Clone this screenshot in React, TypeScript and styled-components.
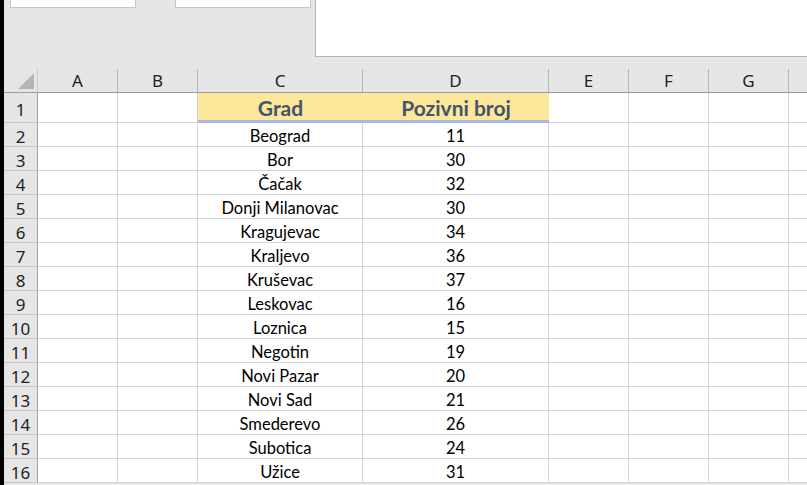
import React from "react";
import styled, { createGlobalStyle } from "styled-components";

const Global = createGlobalStyle`
  html, body { margin: 0; padding: 0; background: #e6e6e6; overflow: hidden; }
  #root { width: 807px; height: 485px; }
`;

const Frame = styled.div`
  width: 807px;
  height: 485px;
  display: flex;
  overflow: hidden;
  background: #e6e6e6;
`;

const Edge = styled.div`
  width: 4px;
  flex: none;
  background: #000;
`;

const Main = styled.div`
  flex: 1;
  display: flex;
  flex-direction: column;
  min-width: 0;
`;

const Top = styled.div`
  height: 69px;
  flex: none;
  display: flex;
  align-items: flex-start;
`;

const Field = styled.div<{ $w: number; $ml: number }>`
  width: ${(p) => p.$w}px;
  margin-left: ${(p) => p.$ml}px;
  height: 8px;
  box-sizing: border-box;
  background: #fff;
  border: 1px solid #c6c6c6;
  border-top: none;
`;

const Panel = styled.div`
  margin-left: 4px;
  flex: 1;
  height: 57px;
  box-sizing: border-box;
  background: #fff;
  border-left: 1px solid #b4b4b4;
  border-bottom: 1px solid #b4b4b4;
`;

const Grid = styled.div`
  display: grid;
  grid-template-columns: 34px 80px 80px 165px 186px 80px 80px 80px 40px;
  grid-auto-rows: 24px;
  grid-template-rows: 24px 30px;
  background: #fff;
`;

const Corner = styled.div`
  background: #e6e6e6;
  border-bottom: 1px solid #9b9b9b;
  border-right: 1px solid #c8c8c8;
  box-sizing: border-box;
  position: relative;
`;

const Tri = styled.div`
  position: absolute;
  right: 3px;
  bottom: 3px;
  width: 0;
  height: 0;
  border-left: 16px solid transparent;
  border-bottom: 16px solid #b5b5b5;
`;

const ColHead = styled.div`
  background: #e6e6e6;
  border-bottom: 1px solid #9b9b9b;
  border-right: 1px solid #b4b4b4;
  box-sizing: border-box;
  display: flex;
  align-items: flex-end;
  justify-content: center;
  font-family: "Noto Sans", "Open Sans", sans-serif;
  font-size: 17px;
  color: #222;
  line-height: 22px;
`;

const RowHead = styled.div`
  background: #e6e6e6;
  border-bottom: 1px solid #c8c8c8;
  border-right: 1px solid #a0a0a0;
  box-sizing: border-box;
  display: flex;
  align-items: center;
  justify-content: center;
  font-family: "Noto Sans", "Open Sans", sans-serif;
  font-size: 17px;
  color: #222;
  padding-top: 3px;
`;

const Cell = styled.div`
  box-sizing: border-box;
  border-right: 1px solid #d4d4d4;
  border-bottom: 1px solid #d4d4d4;
  display: flex;
  align-items: center;
  justify-content: center;
  font-family: "Lato", "Liberation Sans", sans-serif;
  font-size: 16.5px;
  color: #000;
  padding-top: 3px;
`;

const HeadCell = styled.div`
  box-sizing: border-box;
  background: #fce79a;
  border-bottom: 3px solid #a7b8e2;
  display: flex;
  align-items: center;
  justify-content: center;
  font-family: "Lato", "Liberation Sans", sans-serif;
  font-weight: 700;
  font-size: 21px;
  color: #44546a;
  padding-top: 1px;
`;

const cols = ["A", "B", "C", "D", "E", "F", "G", ""];

const data: [string, string][] = [
  ["Beograd", "11"],
  ["Bor", "30"],
  ["Čačak", "32"],
  ["Donji Milanovac", "30"],
  ["Kragujevac", "34"],
  ["Kraljevo", "36"],
  ["Kruševac", "37"],
  ["Leskovac", "16"],
  ["Loznica", "15"],
  ["Negotin", "19"],
  ["Novi Pazar", "20"],
  ["Novi Sad", "21"],
  ["Smederevo", "26"],
  ["Subotica", "24"],
  ["Užice", "31"],
];

export default function App() {
  return (
    <>
      <Global />
      <Frame>
        <Edge />
        <Main>
          <Top>
            <Field $w={126} $ml={6} />
            <Field $w={136} $ml={39} />
            <Panel />
          </Top>
          <Grid>
            <Corner>
              <Tri />
            </Corner>
            {cols.map((c, i) => (
              <ColHead key={i}>{c}</ColHead>
            ))}
            <RowHead>1</RowHead>
            <Cell />
            <Cell />
            <HeadCell>Grad</HeadCell>
            <HeadCell>Pozivni broj</HeadCell>
            <Cell />
            <Cell />
            <Cell />
            <Cell />
            {data.map(([city, code], i) => (
              <React.Fragment key={city}>
                <RowHead>{i + 2}</RowHead>
                <Cell />
                <Cell />
                <Cell>{city}</Cell>
                <Cell>{code}</Cell>
                <Cell />
                <Cell />
                <Cell />
                <Cell />
              </React.Fragment>
            ))}
          </Grid>
        </Main>
      </Frame>
    </>
  );
}
